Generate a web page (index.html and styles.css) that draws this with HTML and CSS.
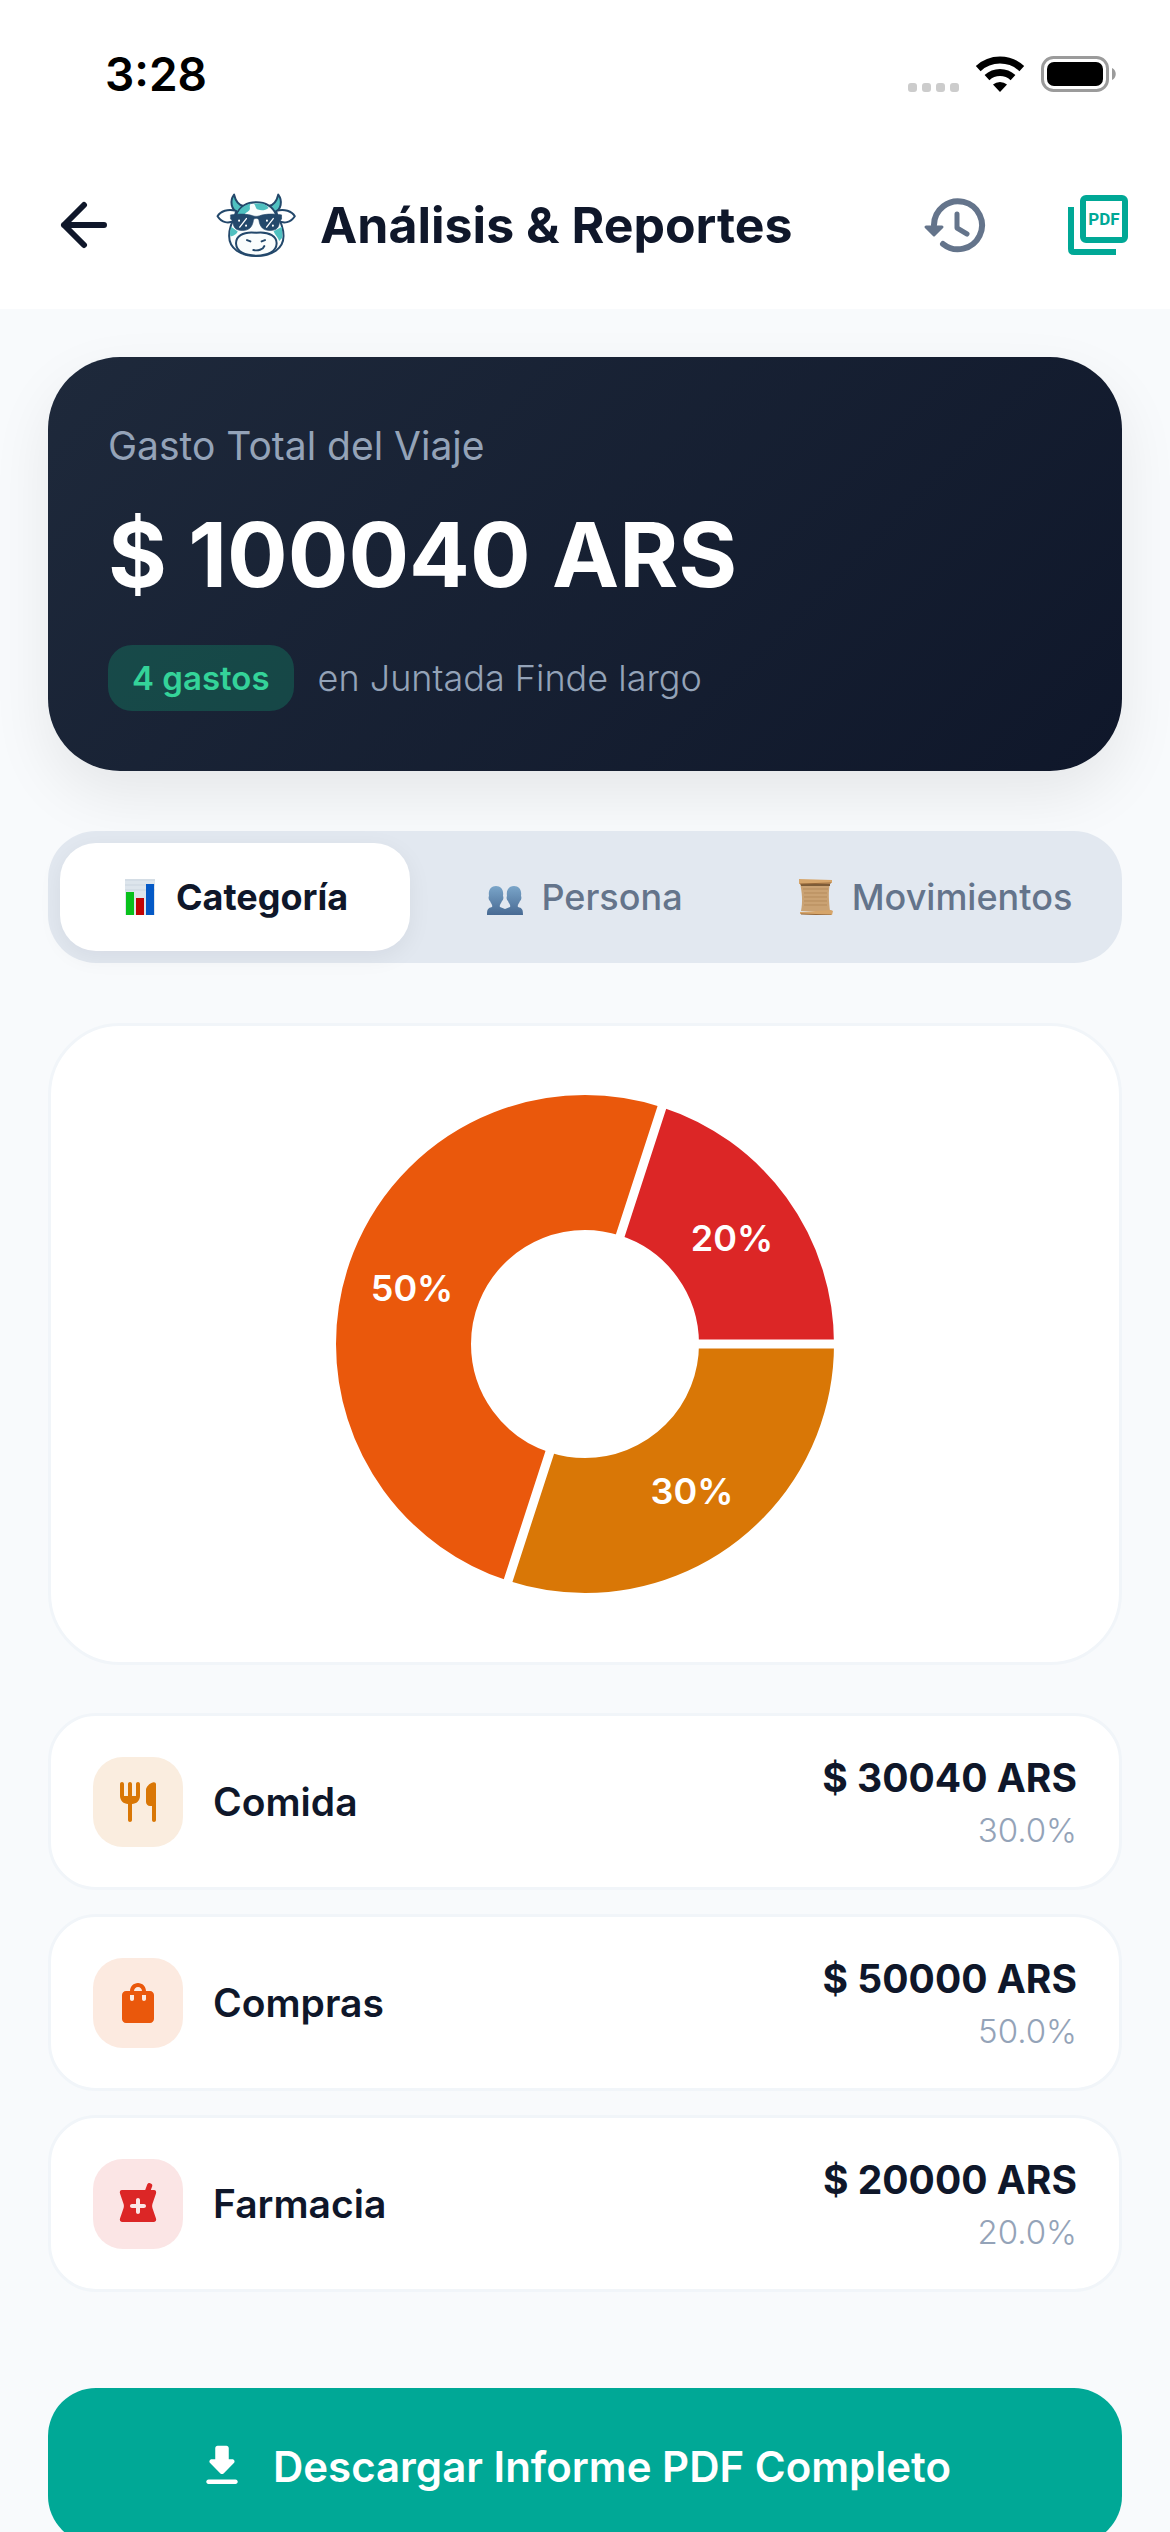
FILE: index.html
```html
<!DOCTYPE html>
<html lang="es">
<head>
    <meta charset="UTF-8">
    <meta name="viewport" content="width=device-width, initial-scale=1.0">
    <title>Análisis & Reportes</title>
    <link rel="stylesheet" href="styles.css">
</head>
<body>
<div class="app">

    <!-- Status bar -->
    <div class="status-bar">
        <span class="status-time">3:28</span>
        <div class="status-icons">
            <div class="signal"><i></i><i></i><i></i><i></i></div>
            <svg class="wifi" viewBox="0 0 50 37" fill="none" stroke="#000" stroke-width="7">
                <path d="M3.2 13.6a32 32 0 0 1 43.6 0"/>
                <path d="M12 22.6a19 19 0 0 1 26 0"/>
                <path d="M25 37l-7-7.4a10.4 10.4 0 0 1 14 0z" fill="#000" stroke="none"/>
            </svg>
            <svg class="battery" viewBox="0 0 76 36">
                <rect x="1.5" y="1.5" width="65" height="33" rx="11" fill="none" stroke="#9b9b9b" stroke-width="3"/>
                <rect x="6" y="6" width="56" height="24" rx="7"/>
                <path d="M71 12c5 2 5 10 0 12z" fill="#9b9b9b"/>
            </svg>
        </div>
    </div>

    <!-- Header -->
    <header class="header">
        <button class="icon-button" type="button" aria-label="Volver">
            <svg class="icon-back" viewBox="0 0 48 48" fill="none" stroke="#0f172a" stroke-width="6" stroke-linecap="round" stroke-linejoin="round">
                <path d="M44 24H4M24 4L4 24l20 20"/>
            </svg>
        </button>
        <div class="brand">
            <svg class="logo" viewBox="50 38 240 196" stroke="#23486b" stroke-width="6" stroke-linejoin="round" stroke-linecap="round">
                <path d="M118 101C94 88 90 62 104 43c4 17 13 31 28 34z" fill="#4fc0c0"/>
                <path d="M223 101c24-13 28-39 14-58-4 17-13 31-28 34z" fill="#4fc0c0"/>
                <path d="M110 92C86 84 62 93 54 108c13 20 33 23 49 14z" fill="#fff"/>
                <path d="M231 92c24-8 48 1 56 16-13 20-33 23-49 14z" fill="#fff"/>
                <path d="M111 103c12-26 34-37 60-37s48 11 60 37c15 22 22 42 22 65 0 38-34 60-82 60s-82-22-82-60c0-23 7-43 22-65z" fill="#fafdfd"/>
                <g stroke="none" fill="#4fc0c0">
                    <path d="M113 105c8-20 22-31 42-35-8 9 0 13-5 20-7 7-14 8-16 16z"/>
                    <path d="M163 70h28c8 4 15 8 17 13-10 8-22 8-32 5-8-3-6-12-13-18z"/>
                    <path d="M95 140l20 14c-3 8-10 12-22 15-3-8-1-18 2-29z"/>
                    <path d="M248 140l-25 13c4 11 13 17 17 30l10-11z"/>
                </g>
                <path d="M170 158c-42-5-62 13-60 34 1 23 27 35 61 35s60-12 61-35c2-21-20-39-62-34z" fill="#fafdfd"/>
                <path d="M94 104c25-4 51-3 67 3 6 2 13 2 19 0 16-6 42-7 67-3v13l-6 4c-1 21-8 30-29 30-20 0-30-10-33-30-1-9-16-9-17 0-3 20-13 30-33 30-21 0-28-9-29-30l-6-4z" fill="#23486b" stroke-width="2"/>
                <g stroke="#fff" stroke-width="4" fill="none">
                    <path d="M141 115l-20 26M222 115l-20 26"/>
                    <path d="M119 121v1M140 136v1M203 121v1M221 136v1" stroke-width="6"/>
                </g>
                <path d="M143 180l10 4M197 180l-10 4M162 210c14 3 29-1 33-12" fill="none"/>
            </svg>
            <h1 class="title">Análisis &amp; Reportes</h1>
        </div>
        <button class="icon-button" type="button" aria-label="Historial">
            <svg class="icon-history" viewBox="0 0 64 60" fill="none" stroke="#64748b" stroke-width="6" stroke-linecap="round" stroke-linejoin="round">
                <path d="M12 30a24 24 0 1 1 9 19"/>
                <path d="M35 19v14l10 6" stroke-width="5"/>
                <path d="M4 32h16l-8 8z" fill="#64748b" stroke-width="3"/>
            </svg>
        </button>
        <button class="icon-button" type="button" aria-label="Exportar PDF">
            <svg class="icon-pdf" viewBox="0 0 60 60" fill="none" stroke="#00a896" stroke-width="6">
                <rect x="15" y="3" width="42" height="42" rx="3"/>
                <path d="M3 12v42q0 3 3 3h42"/>
                <text class="pdf-label" x="36" y="30">PDF</text>
            </svg>
        </button>
    </header>

    <main class="content">
        <!-- Total -->
        <section class="total-card">
            <div class="total-label">Gasto Total del Viaje</div>
            <div class="total-amount">$ 100040 ARS</div>
            <div class="total-meta">
                <span class="badge">4 gastos</span>
                <span class="trip">en Juntada Finde largo</span>
            </div>
        </section>

        <!-- Tabs -->
        <div class="tabs" role="tablist">
            <button class="tab active" type="button" role="tab" aria-selected="true">
                <svg class="tab-icon" viewBox="0 0 36 36">
                    <rect x="3" width="30" height="36" fill="#dde5ec"/>
                    <path d="M3 1h30M3 6h30M3 11h30" stroke="#cbd5df"/>
                    <rect x="4" y="13" width="8" height="23" fill="#08c11b"/>
                    <rect x="14" y="19" width="8" height="17" fill="#c20404"/>
                    <rect x="24" y="5" width="8" height="31" fill="#0459c6"/>
                </svg>
                Categoría
            </button>
            <button class="tab" type="button" role="tab" aria-selected="false">
                <svg class="tab-icon" viewBox="0 0 36 36">
                    <defs>
                        <linearGradient id="people" x2="0" y2="1">
                            <stop offset="0" stop-color="#7aa5c9"/>
                            <stop offset="1" stop-color="#486a93"/>
                        </linearGradient>
                    </defs>
                    <path d="M9 7c5 0 8 4 7 10 1 2 0 4-1 5-1 3-3 4-2 6l5 2 5-2c1-2-1-3-2-6-1-1-2-3-1-5-1-6 2-10 7-10s8 4 7 10c1 2 0 4-1 5-1 3-3 4-2 6 4 1 5 2 5 8H0c0-6 1-7 5-8 1-2-1-3-2-6-1-1-2-3-1-5C1 11 4 7 9 7z" fill="url(#people)"/>
                </svg>
                Persona
            </button>
            <button class="tab" type="button" role="tab" aria-selected="false">
                <svg class="tab-icon" viewBox="0 0 36 36">
                    <path d="M2 4h30c-2 9-1 19 0 28H3c2-9 1-19-1-28z" fill="#caa273"/>
                    <path d="M5 10h25M6 14h23M6 18h23M6 22h23M6 26h23" stroke="#b58b5c"/>
                    <path d="M3 6h29" stroke="#7d5c38" stroke-width="2"/>
                    <path d="M1 0l33 1v3L1 5zM2 33l31-2 2 1-1 4-32-1z" fill="#d6a56a"/>
                    <path d="M2 5l31-1M3 35l30 1" stroke="#96683a"/>
                </svg>
                Movimientos
            </button>
        </div>

        <!-- Donut chart -->
        <section class="chart-card">
            <svg class="donut" viewBox="-249 -249 498 498" role="img" aria-label="Gastos por categoría">
                <g fill="none" stroke-width="135">
                    <circle r="181.5" pathLength="100" stroke="#d97706" stroke-dasharray="30 70"/>
                    <circle r="181.5" pathLength="100" stroke="#ea580c" stroke-dasharray="50 50" stroke-dashoffset="-30"/>
                    <circle r="181.5" pathLength="100" stroke="#dc2626" stroke-dasharray="20 80" stroke-dashoffset="-80"/>
                </g>
                <path d="M0 0H252M0 0L-78 240M0 0L78 -240" stroke="#fff" stroke-width="9"/>
                <g class="donut-label">
                    <text x="107" y="160">30%</text>
                    <text x="-173" y="-43">50%</text>
                    <text x="147" y="-93">20%</text>
                </g>
            </svg>
        </section>

        <!-- Categories -->
        <ul class="categories">
            <li class="category">
                <span class="category-icon food">
                    <svg viewBox="0 0 24 24"><path d="M16 6v6c0 1.1.9 2 2 2h1v7c0 .55.45 1 1 1s1-.45 1-1V3.13c0-.65-.61-1.13-1.24-.98C17.6 2.68 16 4.51 16 6zm-5 3H9V3c0-.55-.45-1-1-1s-1 .45-1 1v6H5V3c0-.55-.45-1-1-1s-1 .45-1 1v6c0 2.21 1.79 4 4 4v8c0 .55.45 1 1 1s1-.45 1-1v-8c2.21 0 4-1.79 4-4V3c0-.55-.45-1-1-1s-1 .45-1 1v6z"/></svg>
                </span>
                <span class="category-name">Comida</span>
                <div class="category-values">
                    <span class="amount">$ 30040 ARS</span>
                    <span class="percent">30.0%</span>
                </div>
            </li>
            <li class="category">
                <span class="category-icon shopping">
                    <svg viewBox="0 0 24 24"><path fill-rule="evenodd" d="M18 6h-2c0-2.21-1.79-4-4-4S8 3.79 8 6H6c-1.1 0-2 .9-2 2v12c0 1.1.9 2 2 2h12c1.1 0 2-.9 2-2V8c0-1.1-.9-2-2-2zm-8 4c0 .55-.45 1-1 1s-1-.45-1-1V8h2v2zm2-6c1.1 0 2 .9 2 2h-4c0-1.1.9-2 2-2zm4 6c0 .55-.45 1-1 1s-1-.45-1-1V8h2v2z"/></svg>
                </span>
                <span class="category-name">Compras</span>
                <div class="category-values">
                    <span class="amount">$ 50000 ARS</span>
                    <span class="percent">50.0%</span>
                </div>
            </li>
            <li class="category">
                <span class="category-icon pharmacy">
                    <svg viewBox="0 0 24 24"><path fill-rule="evenodd" d="M15.6 5l1-2.7c.2-.6.8-.9 1.4-.7l.4.1c.6.2.9.8.7 1.4L18.4 5H20c.9 0 1.3.9 1 1.7l-1.8 5.3c-.2.6-.2 1.4 0 2l1.8 5.3c.3.8-.1 1.7-1 1.7H4c-.9 0-1.3-.9-1-1.7L4.8 14c.2-.6.2-1.4 0-2L3 6.7C2.7 5.9 3.1 5 4 5zM12 9c-.55 0-1 .45-1 1v2H9c-.55 0-1 .45-1 1s.45 1 1 1h2v2c0 .55.45 1 1 1s1-.45 1-1v-2h2c.55 0 1-.45 1-1s-.45-1-1-1h-2v-2c0-.55-.45-1-1-1z"/></svg>
                </span>
                <span class="category-name">Farmacia</span>
                <div class="category-values">
                    <span class="amount">$ 20000 ARS</span>
                    <span class="percent">20.0%</span>
                </div>
            </li>
        </ul>

        <button class="download" type="button">
            <svg class="download-icon" viewBox="0 0 24 24"><path d="M16.59 9H15V4c0-.55-.45-1-1-1h-4c-.55 0-1 .45-1 1v5H7.41c-.89 0-1.34 1.08-.71 1.71l4.59 4.59c.39.39 1.02.39 1.41 0l4.59-4.59c.63-.63.19-1.71-.7-1.71zM5 19c0 .55.45 1 1 1h12c.55 0 1-.45 1-1s-.45-1-1-1H6c-.55 0-1 .45-1 1z"/></svg>
            Descargar Informe PDF Completo
        </button>
    </main>

</div>
</body>
</html>
```

FILE: styles.css
```css
* {
    box-sizing: border-box;
}

body {
    margin: 0;
    font-family: Inter, "Liberation Sans", sans-serif;
    color: #0f172a;
    background-color: #f8fafc;
}

button {
    border: 0;
    padding: 0;
    background: none;
    font: inherit;
    color: inherit;
    cursor: pointer;
}

svg {
    display: block;
}

.app {
    height: 100vh;
    display: flex;
    flex-direction: column;
}

/* Status bar */
.status-bar {
    display: flex;
    justify-content: space-between;
    align-items: center;
    height: 141px;
    padding: 6px 53px 0 105px;
    background-color: white;
    flex-shrink: 0;
}

.status-time {
    font-size: 46px;
    font-weight: 600;
    color: black;
}

.status-icons {
    display: flex;
    align-items: center;
    gap: 16px;
}

.signal {
    display: flex;
    align-self: flex-end;
    gap: 5px;
}

.signal i {
    width: 9px;
    height: 9px;
    border-radius: 3px;
    background-color: #cccccc;
}

.wifi {
    width: 50px;
    height: 37px;
}

.battery {
    width: 76px;
    height: 36px;
}

/* Header */
.header {
    display: flex;
    align-items: center;
    height: 168px;
    padding-left: 12px;
    background-color: white;
    flex-shrink: 0;
}

.icon-button {
    width: 144px;
    height: 144px;
    display: flex;
    align-items: center;
    justify-content: center;
}

.icon-back {
    width: 48px;
    height: 48px;
}

.icon-history {
    width: 64px;
    height: 60px;
}

.icon-pdf {
    width: 60px;
    height: 60px;
}

.pdf-label {
    font-family: Roboto, sans-serif;
    font-size: 17px;
    font-weight: 700;
    text-anchor: middle;
    fill: #00a896;
    stroke: none;
}

.brand {
    display: flex;
    align-items: center;
    flex: 1;
    gap: 24px;
    padding-left: 60px;
}

.logo {
    width: 80px;
    height: 65px;
}

.title {
    margin: 0;
    font-size: 50px;
    font-weight: 700;
    white-space: nowrap;
}

/* Scrollable page content */
.content {
    flex: 1;
    padding: 48px;
    overflow-y: auto;
    scrollbar-width: none;
}

/* Total card */
.total-card {
    padding: 60px;
    border-radius: 72px;
    background: linear-gradient(135deg, #1e293b, #0f172a);
    box-shadow: 0 24px 60px rgba(0, 0, 0, 0.08);
}

.total-label {
    font-size: 39px;
    line-height: 57px;
    font-weight: 400;
    color: #94a3b8;
}

.total-amount {
    margin: 18px 0 27px;
    font-size: 90px;
    line-height: 126px;
    font-weight: 700;
    color: white;
}

.total-meta {
    display: flex;
    align-items: center;
    gap: 24px;
}

.badge {
    padding: 0 24px;
    border-radius: 24px;
    font-size: 33px;
    line-height: 66px;
    font-weight: 600;
    color: #34d399;
    background-color: rgba(16, 185, 129, 0.25);
}

.trip {
    font-size: 36px;
    font-weight: 300;
    color: #94a3b8;
}

/* Tabs */
.tabs {
    display: grid;
    grid-template-columns: repeat(3, 1fr);
    margin-top: 60px;
    padding: 12px;
    border-radius: 48px;
    background-color: #e2e8f0;
}

.tab {
    display: flex;
    align-items: center;
    justify-content: center;
    gap: 18px;
    height: 108px;
    border-radius: 36px;
    font-size: 36px;
    font-weight: 500;
    color: #64748b;
}

.tab.active {
    font-weight: 700;
    color: #0f172a;
    background-color: white;
    box-shadow: 0 6px 24px rgba(15, 23, 42, 0.06);
}

.tab-icon {
    width: 36px;
    height: 36px;
}

/* Donut chart */
.chart-card {
    display: flex;
    justify-content: center;
    margin-top: 60px;
    padding: 69px;
    border: 3px solid #f1f5f9;
    border-radius: 72px;
    background-color: white;
}

.donut {
    width: 498px;
    height: 498px;
}

.donut-label {
    font-size: 36px;
    font-weight: 600;
    fill: white;
    text-anchor: middle;
}

/* Categories */
.categories {
    display: flex;
    flex-direction: column;
    gap: 24px;
    margin: 48px 0 96px;
    padding: 0;
    list-style: none;
}

.category {
    display: flex;
    align-items: center;
    gap: 30px;
    height: 177px;
    padding: 0 42px;
    border: 3px solid #f1f5f9;
    border-radius: 48px;
    background-color: white;
}

.category-icon {
    display: flex;
    align-items: center;
    justify-content: center;
    width: 90px;
    height: 90px;
    border-radius: 30px;
}

.category-icon svg {
    width: 48px;
    height: 48px;
    fill: currentColor;
}

.food {
    color: #d97706;
    background-color: #faeddf;
}

.shopping {
    color: #ea580c;
    background-color: #fceae0;
}

.pharmacy {
    color: #dc2626;
    background-color: #fbe5e5;
}

.category-name {
    flex: 1;
    font-size: 39px;
    font-weight: 600;
}

.category-values {
    display: flex;
    flex-direction: column;
    align-items: flex-end;
}

.amount {
    font-size: 39px;
    line-height: 57px;
    font-weight: 700;
}

.percent {
    font-size: 33px;
    line-height: 48px;
    font-weight: 300;
    color: #94a3b8;
}

/* Download button */
.download {
    display: flex;
    align-items: center;
    justify-content: center;
    gap: 24px;
    width: 100%;
    height: 156px;
    padding-right: 24px;
    border-radius: 48px;
    font-size: 42px;
    font-weight: 600;
    color: white;
    background-color: #00a896;
}

.download-icon {
    width: 54px;
    height: 54px;
    fill: currentColor;
}
```
